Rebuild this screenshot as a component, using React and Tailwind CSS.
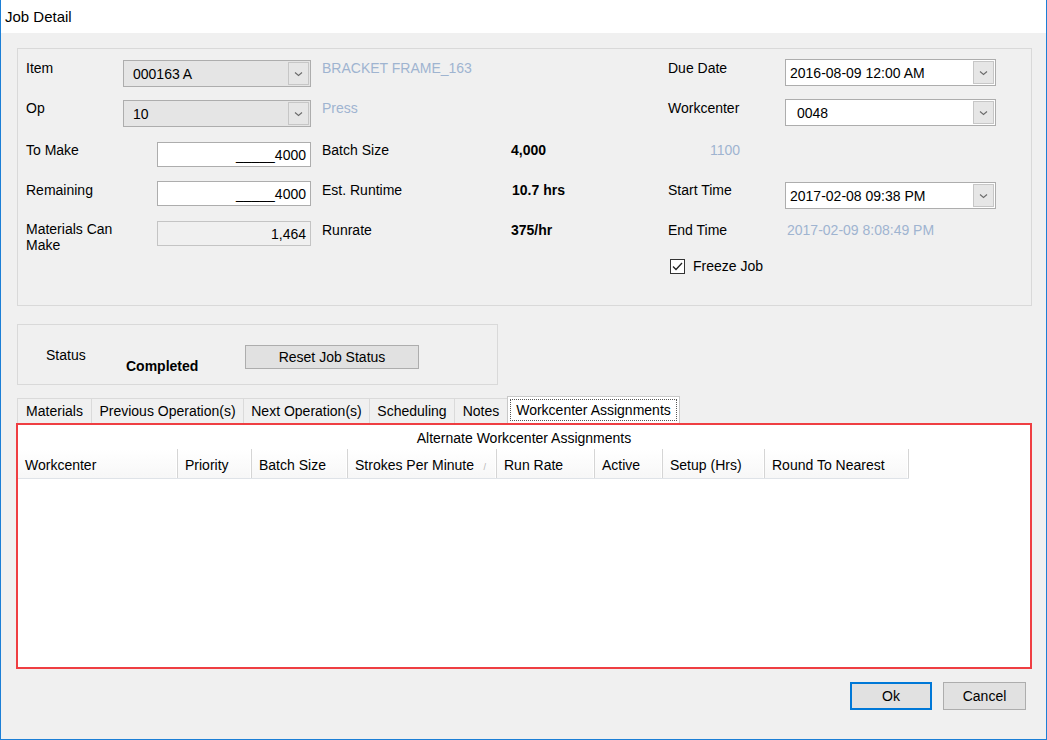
import React from "react";

const Chevron = () => (
  <svg width="9" height="6" viewBox="0 0 9 6">
    <path d="M1 1.5 L4.5 4.5 L8 1.5" fill="none" stroke="#6b6b6b" strokeWidth="1.1" />
  </svg>
);

const Arrow = () => (
  <div className="mr-px flex h-[23px] w-[21px] items-center justify-center border border-[#c6c6c6] bg-[#e6e6e6]">
    <Chevron />
  </div>
);

const light = "text-[#9fb4d0]";

function Row({ children, className }) {
  return <div className={"flex h-[40px] items-start " + (className || "")}>{children}</div>;
}

export default function App() {
  const font = { fontFamily: '"Liberation Sans", Arial, sans-serif' };
  const cols = [
    ["Workcenter", "w-[160px]"],
    ["Priority", "w-[74px]"],
    ["Batch Size", "w-[96px]"],
    ["Strokes Per Minute", "w-[149px]"],
    ["Run Rate", "w-[98px]"],
    ["Active", "w-[68px]"],
    ["Setup (Hrs)", "w-[102px]"],
    ["Round To Nearest", "w-[144px]"],
  ];
  const tabs = [
    ["Materials", "w-[74px]"],
    ["Previous Operation(s)", "w-[152px]"],
    ["Next Operation(s)", "w-[126px]"],
    ["Scheduling", "w-[85px]"],
    ["Notes", "w-[53px]"],
  ];
  return (
    <div
      className="flex h-[740px] w-[1047px] flex-col overflow-hidden border-x border-b border-[#1c7fd6] bg-[#f0f0f0] text-[14px] leading-4 text-black"
      style={font}
    >
      {/* Title bar */}
      <div className="flex h-[33px] shrink-0 items-center bg-white pl-[4px] text-[15px]">Job Detail</div>

      <div className="flex flex-col pt-[15px]">
        {/* Top panel */}
        <div className="ml-[16px] flex h-[258px] w-[1015px] border border-[#d9d9d9]">
          {/* Left part */}
          <div className="flex w-[650px] flex-col pl-[8px] pt-[11px]">
            <Row>
              <div className="w-[97px]">Item</div>
              <div className="flex h-[27px] w-[188px] items-center justify-between border border-[#adadad] bg-[#e5e5e5]">
                <span className="pl-[9px]">000163 A</span>
                <Arrow />
              </div>
              <div className={"ml-[11px] " + light}>BRACKET FRAME_163</div>
            </Row>
            <Row>
              <div className="w-[97px]">Op</div>
              <div className="flex h-[27px] w-[188px] items-center justify-between border border-[#adadad] bg-[#e5e5e5]">
                <span className="pl-[9px]">10</span>
                <Arrow />
              </div>
              <div className={"ml-[11px] " + light}>Press</div>
            </Row>
            <Row className="pt-[2px]">
              <div className="w-[131px]">To Make</div>
              <div className="flex h-[25px] w-[154px] items-center justify-end border border-[#adadad] bg-white pr-[4px]">
                _____4000
              </div>
              <div className="ml-[11px] w-[189px]">Batch Size</div>
              <div className="font-bold">4,000</div>
            </Row>
            <Row className="pt-px">
              <div className="w-[131px] pt-px">Remaining</div>
              <div className="flex h-[25px] w-[154px] items-center justify-end border border-[#adadad] bg-white pr-[4px]">
                _____4000
              </div>
              <div className="ml-[11px] w-[190px] pt-px">Est. Runtime</div>
              <div className="pt-px font-bold">10.7 hrs</div>
            </Row>
            <Row className="pt-px">
              <div className="w-[131px]">
                Materials Can
                <br />
                Make
              </div>
              <div className="flex h-[25px] w-[154px] items-center justify-end border border-[#c4c4c4] bg-[#f0f0f0] pr-[4px]">
                1,464
              </div>
              <div className="ml-[11px] w-[189px] pt-px">Runrate</div>
              <div className="pt-px font-bold">375/hr</div>
            </Row>
          </div>

          {/* Right part */}
          <div className="flex flex-col pt-[10px]">
            <Row>
              <div className="w-[117px] pt-px">Due Date</div>
              <div className="flex h-[27px] w-[211px] items-center justify-between border border-[#adadad] bg-white">
                <span className="pl-[4px]">2016-08-09 12:00 AM</span>
                <Arrow />
              </div>
            </Row>
            <Row>
              <div className="w-[117px] pt-px">Workcenter</div>
              <div className="flex h-[27px] w-[211px] items-center justify-between border border-[#adadad] bg-white">
                <span className="pl-[11px]">0048</span>
                <Arrow />
              </div>
            </Row>
            <Row className="pt-[3px]">
              <div className={"pl-[42px] " + light}>1100</div>
            </Row>
            <Row className="pt-[3px]">
              <div className="w-[117px]">Start Time</div>
              <div className="flex h-[27px] w-[211px] items-center justify-between border border-[#adadad] bg-white">
                <span className="pl-[4px]">2017-02-08 09:38 PM</span>
                <Arrow />
              </div>
            </Row>
            <Row className="pt-[3px]">
              <div className="w-[119px]">End Time</div>
              <div className={light}>2017-02-09 8:08:49 PM</div>
            </Row>
            <div className="flex items-center pl-[2px]">
              <div className="flex h-[15px] w-[15px] items-center justify-center border border-[#333] bg-white">
                <svg width="11" height="9" viewBox="0 0 11 9">
                  <path d="M1 4.5 L4 7.5 L10 1" fill="none" stroke="#222" strokeWidth="1.3" />
                </svg>
              </div>
              <span className="ml-[8px] -mt-px">Freeze Job</span>
            </div>
          </div>
        </div>

        {/* Status panel */}
        <div className="ml-[16px] mt-[18px] flex h-[61px] w-[481px] items-start border border-[#d9d9d9]">
          <div className="ml-[28px] mt-[22px] w-[80px]">Status</div>
          <div className="mt-[33px] w-[119px] font-bold">Completed</div>
          <div className="mt-[20px] flex h-[24px] w-[174px] items-center justify-center border border-[#adadad] bg-[#e1e1e1]">
            Reset Job Status
          </div>
        </div>

        {/* Tabs */}
        <div className="ml-[16px] mt-[11px] flex h-[27px] items-end">
          {tabs.map(([t, w]) => (
            <div
              key={t}
              className={"flex h-[25px] items-center justify-center border-l border-t border-[#dadada] bg-[#f0f0f0] " + w}
            >
              {t}
            </div>
          ))}
          <div className="flex h-[27px] w-[173px] items-center justify-center border border-b-0 border-[#c8c8c8] bg-white p-[2px]">
            <div className="flex h-full w-full items-center justify-center border border-dotted border-[#555]">
              Workcenter Assignments
            </div>
          </div>
        </div>

        {/* Red highlighted grid */}
        <div className="ml-[15px] flex h-[246px] w-[1016px] flex-col border-2 border-[#ef3e42] bg-white">
          <div className="pt-[5px] text-center">Alternate Workcenter Assignments</div>
          <div className="mt-[3px] flex h-[30px] w-[891px] border-b border-[#dfe3e8] bg-gradient-to-b from-white to-[#f7f7f7]">
            {cols.map(([c, w]) => (
              <div
                key={c}
                className={
                  "relative flex h-full items-center border-r border-[#d5d5d5] pl-[7px] pt-[2px] shadow-[inset_-1px_0_0_#ffffff] " + w
                }
              >
                {c}
                {c === "Strokes Per Minute" && (
                  <span className="absolute right-[10px] top-[10px] text-[9px] text-[#b5b5b5]">/</span>
                )}
              </div>
            ))}
          </div>
        </div>

        {/* Buttons */}
        <div className="mt-[13px] flex justify-end pr-[20px]">
          <div className="flex h-[28px] w-[82px] items-center justify-center border-2 border-[#0078d7] bg-[#e1e1e1]">
            Ok
          </div>
          <div className="ml-[11px] flex h-[28px] w-[83px] items-center justify-center border border-[#adadad] bg-[#e1e1e1]">
            Cancel
          </div>
        </div>
      </div>
    </div>
  );
}
